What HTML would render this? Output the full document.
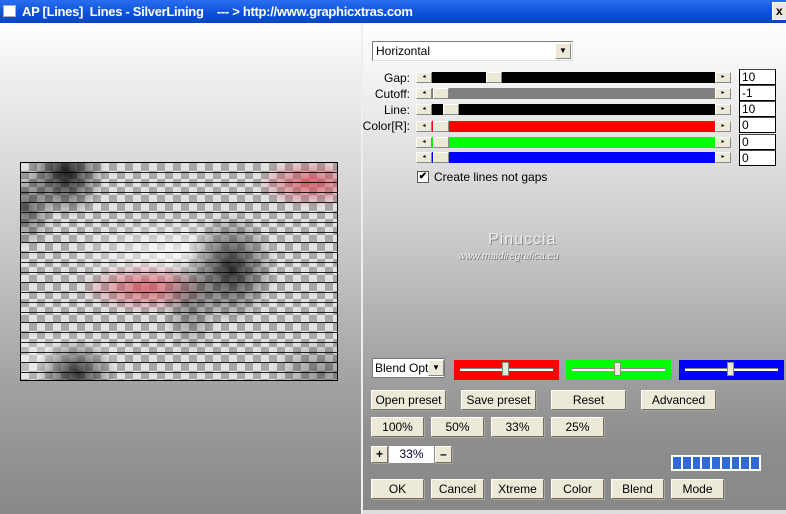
<!DOCTYPE html><html><head><style>
*{margin:0;padding:0;box-sizing:border-box}
body{width:786px;height:514px;overflow:hidden;position:relative;font-family:"Liberation Sans",sans-serif;font-size:12px;background:#999}
.a{position:absolute}
#title{left:0;top:0;width:786px;height:23px;background:linear-gradient(#2a6df0,#0a50d8 60%,#0846c0);color:#fff;font-size:13px;font-weight:bold;line-height:23px;padding-left:22px;letter-spacing:-0.3px}
#left{left:0;top:23px;width:361px;height:491px;background:linear-gradient(#fff 0%,#f0f0f0 10%,#c8c8c8 45%,#a0a0a0 75%,#888 100%)}
#right{left:363px;top:23px;width:423px;height:487px;background:linear-gradient(#fff 0%,#f2f2f2 12%,#d0d0d0 40%,#aaa 65%,#8e8e8e 85%,#888 100%)}
#sep{left:361px;top:23px;width:2px;height:491px;background:#eee}
#bot{left:363px;top:510px;width:423px;height:4px;background:#ddd}
.btn{position:absolute;height:20px;background:#ece9d8;border:1px solid #fff;border-right-color:#716f64;border-bottom-color:#716f64;box-shadow:1px 1px 0 #aca899;text-align:center;line-height:18px;font-size:12px;color:#000}
.lbl{position:absolute;width:60px;text-align:right;font-size:12px;color:#000}
.trk{position:absolute;left:416px;width:315px;height:11px}
.arw{position:absolute;top:0;width:16px;height:11px;background:#ece9d8;border:1px solid #fff;border-right-color:#888;border-bottom-color:#888;font-size:6px;line-height:9px;text-align:center}
.th{position:absolute;top:0;width:16px;height:11px;background:#ece9d8;border:1px solid #fff;border-right-color:#888;border-bottom-color:#888}
.val{position:absolute;left:739px;width:37px;height:16px;background:#fff;border:1px solid #000;border-top-color:#444;font-size:12px;line-height:14px;padding-left:2px}
</style></head><body>
<div id="title" class="a"><span style="position:absolute;left:3px;top:5px;width:13px;height:12px;background:#fff;border:1px solid #aac"></span>AP [Lines]&nbsp; Lines - SilverLining &nbsp;&nbsp; --- &gt; http://www.graphicxtras.com</div>
<div class="a" style="left:772px;top:2px;width:16px;height:18px;background:#ece9d8;border:1px solid #fff;font-weight:bold;font-size:12px;line-height:16px;padding-left:3px">x</div>
<div id="left" class="a"></div>
<div id="sep" class="a"></div>
<div id="right" class="a"></div>
<div id="bot" class="a"></div>

<!-- preview -->
<div class="a" style="left:20px;top:162px;width:318px;height:219px;border:1px solid #000;overflow:hidden;background:conic-gradient(#a8a8a8 25%,#e2e2e2 0 50%,#a8a8a8 0 75%,#e2e2e2 0) 0 0/16px 16px">
<div class="a" style="inset:0;background:
radial-gradient(ellipse 40px 45px at 45px 10px,rgba(0,0,0,.85),transparent),
radial-gradient(ellipse 30px 40px at 5px 45px,rgba(0,0,0,.55),transparent),
radial-gradient(ellipse 45px 55px at 210px 105px,rgba(0,0,0,.8),transparent),
radial-gradient(ellipse 30px 50px at 170px 140px,rgba(0,0,0,.4),transparent),
radial-gradient(ellipse 65px 25px at 125px 125px,rgba(215,70,85,.75),transparent),
radial-gradient(ellipse 110px 35px at 150px 90px,rgba(255,255,255,.75),transparent),
radial-gradient(ellipse 55px 25px at 290px 20px,rgba(215,70,85,.8),transparent),
radial-gradient(ellipse 40px 35px at 55px 210px,rgba(0,0,0,.75),transparent),
radial-gradient(ellipse 50px 35px at 300px 210px,rgba(0,0,0,.35),transparent),
radial-gradient(ellipse 70px 25px at 40px 195px,rgba(255,255,255,.55),transparent)"></div>
<div class="a" style="inset:0;background:repeating-linear-gradient(transparent 0,transparent 9px,rgba(0,0,0,.85) 9px,rgba(0,0,0,.85) 10px);background-position:0 0"></div>
</div>

<!-- dropdown -->
<div class="a" style="left:372px;top:41px;width:201px;height:20px;background:#fff;border:1px solid #7a7a7a;border-right-color:#ddd;border-bottom-color:#ddd;font-size:12px;line-height:18px;padding-left:3px">Horizontal<div class="a" style="right:1px;top:1px;width:16px;height:16px;background:#ece9d8;border:1px solid #fff;border-right-color:#888;border-bottom-color:#888;font-size:8px;line-height:14px;text-align:center">▼</div></div>

<div class="lbl" style="left:350px;top:71px">Gap:</div>
<div class="lbl" style="left:350px;top:87px">Cutoff:</div>
<div class="lbl" style="left:350px;top:103px">Line:</div>
<div class="lbl" style="left:350px;top:119px">Color[R]:</div>

<div class="trk" style="top:72px;background:#000"><div class="arw" style="left:0">◂</div><div class="th" style="left:70px"></div><div class="arw" style="right:0">▸</div></div>
<div class="trk" style="top:88px;background:#808080"><div class="arw" style="left:0">◂</div><div class="th" style="left:17px"></div><div class="arw" style="right:0">▸</div></div>
<div class="trk" style="top:104px;background:#000"><div class="arw" style="left:0">◂</div><div class="th" style="left:27px"></div><div class="arw" style="right:0">▸</div></div>
<div class="trk" style="top:121px;background:#f00"><div class="arw" style="left:0">◂</div><div class="th" style="left:17px"></div><div class="arw" style="right:0">▸</div></div>
<div class="trk" style="top:137px;background:#0f0"><div class="arw" style="left:0">◂</div><div class="th" style="left:17px"></div><div class="arw" style="right:0">▸</div></div>
<div class="trk" style="top:152px;background:#00f"><div class="arw" style="left:0">◂</div><div class="th" style="left:17px"></div><div class="arw" style="right:0">▸</div></div>

<div class="val" style="top:69px">10</div>
<div class="val" style="top:85px">-1</div>
<div class="val" style="top:101px">10</div>
<div class="val" style="top:117px">0</div>
<div class="val" style="top:134px">0</div>
<div class="val" style="top:150px">0</div>

<div class="a" style="left:417px;top:171px;width:12px;height:12px;background:#fff;border:1px solid #555;font-size:10px;line-height:10px;text-align:center;font-weight:bold">✔</div>
<div class="a" style="left:434px;top:170px;font-size:12px">Create lines not gaps</div>

<div class="a" style="left:488px;top:231px;font-size:16px;color:#eee;text-shadow:1px 1px 0 #888;letter-spacing:1px">Pinuccia</div>
<div class="a" style="left:458px;top:251px;font-size:10px;color:#eee;text-shadow:1px 1px 0 #777;font-style:italic">www.maidiregrafica.eu</div>

<!-- blend -->
<div class="a" style="left:372px;top:358px;width:73px;height:20px;background:#fff;border:1px solid #7a7a7a;font-size:12px;line-height:18px;padding-left:2px;overflow:hidden;white-space:nowrap">Blend Opti<div class="a" style="right:0;top:1px;width:16px;height:16px;background:#ece9d8;border:1px solid #fff;border-right-color:#888;border-bottom-color:#888;font-size:8px;line-height:14px;text-align:center">▼</div></div>
<div class="a" style="left:454px;top:360px;width:105px;height:20px;background:#f00"><div class="a" style="left:6px;top:8px;width:93px;height:3px;background:#fff;border-top:1px solid #888"></div><div class="a" style="left:48px;top:2px;width:7px;height:14px;background:#ece9d8;border:1px solid #888"></div></div>
<div class="a" style="left:566px;top:360px;width:105px;height:20px;background:#0f0"><div class="a" style="left:6px;top:8px;width:93px;height:3px;background:#fff;border-top:1px solid #888"></div><div class="a" style="left:48px;top:2px;width:7px;height:14px;background:#ece9d8;border:1px solid #888"></div></div>
<div class="a" style="left:679px;top:360px;width:105px;height:20px;background:#00f"><div class="a" style="left:6px;top:8px;width:93px;height:3px;background:#fff;border-top:1px solid #888"></div><div class="a" style="left:48px;top:2px;width:7px;height:14px;background:#ece9d8;border:1px solid #888"></div></div>

<div class="btn" style="left:371px;top:390px;width:75px">Open preset</div>
<div class="btn" style="left:461px;top:390px;width:75px">Save preset</div>
<div class="btn" style="left:551px;top:390px;width:75px">Reset</div>
<div class="btn" style="left:641px;top:390px;width:75px">Advanced</div>

<div class="btn" style="left:371px;top:417px;width:53px">100%</div>
<div class="btn" style="left:431px;top:417px;width:53px">50%</div>
<div class="btn" style="left:491px;top:417px;width:53px">33%</div>
<div class="btn" style="left:551px;top:417px;width:53px">25%</div>

<div class="btn" style="left:371px;top:446px;width:17px;height:17px;line-height:14px;font-weight:bold">+</div>
<div class="a" style="left:389px;top:446px;width:45px;height:17px;background:#fff;text-align:center;color:#003;line-height:16px">33%</div>
<div class="btn" style="left:435px;top:446px;width:17px;height:17px;line-height:14px;font-weight:bold">–</div>

<div class="a" style="left:671px;top:455px;width:90px;height:16px;background:#fff;padding:2px;display:flex;gap:2px">
<i style="flex:1;background:#2f6bd0"></i><i style="flex:1;background:#2f6bd0"></i><i style="flex:1;background:#2f6bd0"></i><i style="flex:1;background:#2f6bd0"></i><i style="flex:1;background:#2f6bd0"></i><i style="flex:1;background:#2f6bd0"></i><i style="flex:1;background:#2f6bd0"></i><i style="flex:1;background:#2f6bd0"></i><i style="flex:1;background:#2f6bd0"></i></div>

<div class="btn" style="left:371px;top:479px;width:53px">OK</div>
<div class="btn" style="left:431px;top:479px;width:53px">Cancel</div>
<div class="btn" style="left:491px;top:479px;width:53px">Xtreme</div>
<div class="btn" style="left:551px;top:479px;width:53px">Color</div>
<div class="btn" style="left:611px;top:479px;width:53px">Blend</div>
<div class="btn" style="left:671px;top:479px;width:53px">Mode</div>
</body></html>
